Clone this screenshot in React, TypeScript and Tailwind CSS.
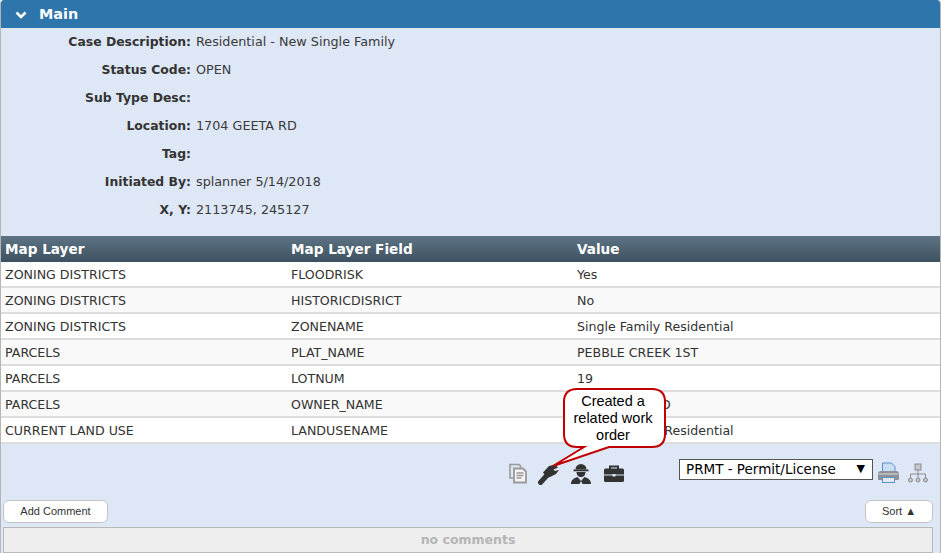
import React from "react";

const fields: [string, string][] = [
  ["Case Description:", "Residential - New Single Family"],
  ["Status Code:", "OPEN"],
  ["Sub Type Desc:", ""],
  ["Location:", "1704 GEETA RD"],
  ["Tag:", ""],
  ["Initiated By:", "splanner 5/14/2018"],
  ["X, Y:", "2113745, 245127"],
];

const rows: [string, string, string][] = [
  ["ZONING DISTRICTS", "FLOODRISK", "Yes"],
  ["ZONING DISTRICTS", "HISTORICDISRICT", "No"],
  ["ZONING DISTRICTS", "ZONENAME", "Single Family Residential"],
  ["PARCELS", "PLAT_NAME", "PEBBLE CREEK 1ST"],
  ["PARCELS", "LOTNUM", "19"],
  ["PARCELS", "OWNER_NAME", "GEETA INC LTD"],
  ["CURRENT LAND USE", "LANDUSENAME", "Single Family Residential"],
];

const font = { fontFamily: "'DejaVu Sans', sans-serif" };
const arial = { fontFamily: "'Liberation Sans', sans-serif" };

export default function App() {
  return (
    <div
      className="relative w-[941px] h-[553px] overflow-hidden bg-[#dee7f6] border-x border-x-[#b5b5b5] rounded-t-[4px] text-[12.6px] text-[#333]"
      style={font}
    >
      <div className="h-[28px] bg-[#2e75ab] flex items-center pl-[14px] pt-[1px] gap-[12px] text-white font-bold text-[14.4px]">
        <svg width="12" height="8" viewBox="0 0 12 8" fill="none">
          <path d="M1.5 1.5 6 6l4.5-4.5" stroke="white" strokeWidth="2.6" />
        </svg>
        <span>Main</span>
      </div>

      <div className="h-[208px] flex flex-col">
        {fields.map(([k, v]) => (
          <div key={k} className="h-[28px] flex items-center">
            <div className="w-[190px] text-right font-bold shrink-0 text-[12.4px]">{k}</div>
            <div className="pl-[5px] text-[12.75px] text-[#3a3a3a]">{v}</div>
          </div>
        ))}
      </div>

      <div className="h-[26px] flex items-center font-bold text-white text-[13.6px] bg-gradient-to-b from-[#5e7484] to-[#3e5160] pl-[4px] pt-[1px]">
        <div className="w-[286px]">Map Layer</div>
        <div className="w-[286px]">Map Layer Field</div>
        <div>Value</div>
      </div>

      {rows.map((r, i) => (
        <div
          key={i}
          className={`h-[26px] flex items-center pl-[4px] pt-[2px] border-b-2 border-b-[#dddddd] ${i % 2 ? "bg-[#f9f9f9]" : "bg-white"}`}
        >
          <div className="w-[286px]">{r[0]}</div>
          <div className="w-[286px]">{r[1]}</div>
          <div>{r[2]}</div>
        </div>
      ))}

      <div className="flex items-start h-[56px]">
        <div className="ml-[506px] mt-[19px] flex items-start">
          {/* copy */}
          <svg width="22" height="22" viewBox="0 0 22 22">
            <path d="M3 1.500h9l1.500 1.500v12h-10.500z" fill="#dee7f6" stroke="#999" strokeWidth="1.600" />
            <path d="M7 5.500h9l3 3v11h-12z" fill="#f4f4f4" stroke="#999" strokeWidth="1.800" />
            <path d="M9.500 10h7M9.500 12.500h7M9.500 15h5" stroke="#999" strokeWidth="1.300" />
          </svg>
          {/* pipe wrench */}
          <svg width="22" height="22" viewBox="0 0 22 22" className="ml-[9px]">
            <path d="M2.500 19.500 10.500 10.500" stroke="#333" strokeWidth="5" strokeLinecap="round" />
            <path d="M5 9.500 11 3 17 1.500 20 4.500 15.500 6.500 17 8 21 7 18 11 13 13.500 9 15z" fill="#333" />
          </svg>
          {/* worker */}
          <svg width="22" height="22" viewBox="0 0 22 22" className="ml-[10px]">
            <path d="M5.500 6.500a5.500 5.500 0 0 1 11 0z" fill="#333" />
            <rect x="3.500" y="6.500" width="15" height="1.800" fill="#333" />
            <path d="M6.500 9h9c0 3-2 5-4.500 5s-4.500-2-4.500-5z" fill="#333" />
            <path d="M1 21c0-4 3-6 6.500-7l3.500 4 3.500-4c3.500 1 6.500 3 6.500 7z" fill="#333" />
            <path d="M11 18l-1.500 3h3z" fill="#dee7f6" />
          </svg>
          {/* briefcase */}
          <svg width="22" height="20" viewBox="0 0 22 20" className="ml-[11px] mt-[1px]">
            <path d="M7 5V2.500h8V5" fill="none" stroke="#333" strokeWidth="2" />
            <path d="M1 6q0-1.500 1.500-1.500h17q1.500 0 1.500 1.500v4.500H1z" fill="#333" />
            <path d="M1 11.500h20v5q0 1.500-1.500 1.500h-17q-1.500 0-1.500-1.500z" fill="#333" />
            <rect x="9.500" y="10" width="3" height="2.500" fill="#dee7f6" />
          </svg>
        </div>
        <div className="ml-[auto] mr-[11px] mt-[15px] flex items-start">
          <div className="w-[194px] h-[21px] border border-[#555] bg-white flex items-center justify-between pl-[6px] pr-[7px] text-[13.5px] text-black">
            <span>PRMT - Permit/License</span>
            <span className="text-[11px]">▼</span>
          </div>
          {/* printer */}
          <svg width="23" height="22" viewBox="0 0 23 22" className="ml-[4px] mt-[3px]">
            <path d="M5.500 1h9l3.500 3.500v6h-12.500z" fill="#c9ddf5" stroke="#5b92cf" />
            <path d="M1 12q0-3 3-3h15q3 0 3 3v5q0 1-1 1H2q-1 0-1-1z" fill="#8e9296" />
            <rect x="1.500" y="11" width="20" height="2" fill="#b5b8bb" />
            <rect x="5.500" y="15.500" width="12" height="5" fill="#e6e9ec" stroke="#5b92cf" />
          </svg>
          {/* hierarchy */}
          <svg width="22" height="20" viewBox="0 0 22 20" className="ml-[7px] mt-[4px]" fill="none" stroke="#8a8a8a">
            <rect x="8" y="1" width="6" height="6" fill="#c5c8cc" />
            <path d="M11 7v4M3.500 15v-4h15v4M11 11v4" />
            <circle cx="3.500" cy="17" r="2" fill="#c5c8cc" />
            <circle cx="11" cy="17" r="2" fill="#c5c8cc" />
            <circle cx="18.500" cy="17" r="2" fill="#c5c8cc" />
          </svg>
        </div>
      </div>

      <div className="flex justify-between pl-[2px] pr-[7px] h-[27px]" style={arial}>
        <button className="w-[105px] h-[23px] bg-white border border-[#c4c4c4] rounded-[6px] text-[11px] text-[#333]">Add Comment</button>
        <button className="w-[68px] h-[23px] bg-white border border-[#c4c4c4] rounded-[6px] text-[11px] text-[#333]">Sort ▲</button>
      </div>
      <div className="ml-[2px] mr-[7px] h-[26px] bg-[#eeeeee] border border-[#b8b8b8] flex items-center justify-center font-bold text-[#b5b5b5] text-[12.5px]">
        no comments
      </div>

      <div className="absolute left-[545px] top-[388px] w-[125px] h-[85px]">
        <svg width="125" height="85" viewBox="0 0 125 85" className="absolute inset-0">
          <path
            d="M31 1H106Q119 1 119 14V46Q119 59 106 59H63L7 78 38 59H31Q18 59 18 46V14Q18 1 31 1Z"
            fill="white"
            stroke="#c00000"
            strokeWidth="2"
          />
        </svg>
        <div
          className="absolute left-[16px] top-[5px] w-[102px] text-center text-[14.5px] leading-[17px] text-black"
          style={arial}
        >
          Created a related work order
        </div>
      </div>
    </div>
  );
}
